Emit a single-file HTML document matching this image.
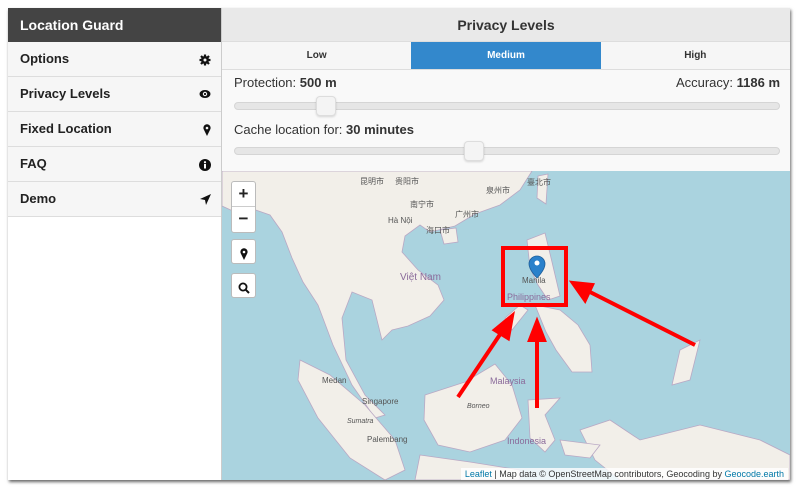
<!DOCTYPE html>
<html><head><meta charset="utf-8"><style>
*{box-sizing:border-box;margin:0;padding:0}
body{width:800px;height:489px;background:#fff;font-family:"Liberation Sans","Noto Sans CJK SC",sans-serif;position:relative;overflow:hidden}
#win{position:absolute;left:8px;top:8px;width:782px;height:472px;background:#fff;box-shadow:1px 2px 3px rgba(0,0,0,.6);overflow:hidden}
#side{position:absolute;left:0;top:0;width:214px;height:472px;background:#fff;border-right:1px solid #ccc}
#side .hd{height:34px;background:#444;color:#fff;font-weight:bold;font-size:14px;line-height:34px;padding-left:12px}
#side .it{height:35px;background:#f6f6f6;border-bottom:1px solid #ddd;font-weight:bold;font-size:13px;line-height:34px;padding-left:12px;color:#222;position:relative}
#side .it svg{position:absolute;right:10px;top:12px}
#main{position:absolute;left:214px;top:0;right:0;height:472px}
.ttl{height:34px;background:#e9e9e9;border-bottom:1px solid #ddd;text-align:center;font-weight:bold;font-size:14px;line-height:34px;color:#333}
.tabs{display:flex;height:28px;background:#f6f6f6;border-bottom:1px solid #ddd}
.tabs div{flex:1;text-align:center;font-size:10px;line-height:28px;color:#333;font-weight:bold}
.tabs .a{background:#3388cc;color:#fff}
.pn{position:absolute;top:62px;left:0;right:0;height:101px;background:#f9f9f9;font-size:13px;color:#333}
.trk{position:absolute;left:12px;right:10px;height:8px;border-radius:4px;background:#e6e6e6;border:1px solid #d5d5d5}
.hdl{position:absolute;width:20px;height:20px;border-radius:4px;background:#f4f4f4;border:1px solid #ddd;box-shadow:0 1px 2px rgba(0,0,0,.15)}
#map{position:absolute;top:163px;left:0;right:0;bottom:0;background:#aad3df}
.btn{position:absolute;left:9px;width:25px;background:#fff;border:1px solid #bbb;border-radius:3px;text-align:center;font-weight:bold;font-size:17px;color:#222}
.attr{position:absolute;right:2px;bottom:0;background:rgba(255,255,255,.8);font-size:9px;padding:1px 4px;color:#333}
.attr b{color:#0078a8;font-weight:normal}
</style></head><body>
<div id="win">
<div id="side">
<div class="hd">Location Guard</div>
<div class="it">Options<svg width="12" height="12" viewBox="0 0 12 12"><circle cx="6" cy="6" r="4" fill="#111"/><g stroke="#111" stroke-width="2.2"><line x1="6" y1="0.5" x2="6" y2="11.5"/><line x1="0.5" y1="6" x2="11.5" y2="6"/><line x1="2" y1="2" x2="10" y2="10"/><line x1="10" y1="2" x2="2" y2="10"/></g><circle cx="6" cy="6" r="1.5" fill="#f6f6f6"/></svg></div>
<div class="it">Privacy Levels<svg width="12" height="10" viewBox="0 0 12 10"><ellipse cx="6" cy="5" rx="5.5" ry="4" fill="#111"/><circle cx="6" cy="5" r="2.2" fill="#f6f6f6"/><circle cx="6" cy="5" r="1.1" fill="#111"/></svg></div>
<div class="it">Fixed Location<svg width="8" height="12" viewBox="0 0 8 12"><path d="M4 12L0.8 5.5A3.6 3.6 0 1 1 7.2 5.5Z" fill="#111"/><circle cx="4" cy="4" r="1.3" fill="#f6f6f6"/></svg></div>
<div class="it">FAQ<svg width="12" height="12" viewBox="0 0 12 12"><circle cx="6" cy="6" r="6" fill="#111"/><rect x="5" y="5" width="2" height="4.5" fill="#fff"/><circle cx="6" cy="3.2" r="1.1" fill="#fff"/></svg></div>
<div class="it">Demo<svg width="11" height="11" viewBox="0 0 11 11"><path d="M11 0L0 5L5 6L6 11Z" fill="#111"/></svg></div>
</div>
<div id="main">
<div class="ttl">Privacy Levels</div>
<div class="tabs"><div>Low</div><div class="a">Medium</div><div>High</div></div>
<div class="pn">
<div style="position:absolute;left:12px;top:5px">Protection: <b>500 m</b></div>
<div style="position:absolute;right:10px;top:5px">Accuracy: <b>1186 m</b></div>
<div class="trk" style="top:32px"></div><div class="hdl" style="left:94px;top:26px"></div>
<div style="position:absolute;left:12px;top:52px">Cache location for: <b>30 minutes</b></div>
<div class="trk" style="top:77px"></div><div class="hdl" style="left:242px;top:71px"></div>
</div>
<div id="map">
<svg width="568" height="309" viewBox="222 171 568 309" style="position:absolute;left:0;top:0">
<g fill="#f2efe9" stroke="#b9a8c4" stroke-width="0.8">
<path d="M222 171L532 171L520 190L500 205L475 214L455 226L430 232L420 225L405 236L402 252L418 270L438 285L444 300L430 316L408 326L392 330L382 340L372 300L352 292L342 318L346 360L365 395L385 415L375 418L352 385L333 345L318 305L303 282L292 258L282 232L270 215L250 208L235 212L222 206Z"/>
<path d="M300 360L330 375L365 405L395 440L405 470L385 480L350 458L318 418L298 380Z"/>
<path d="M425 395L465 382L495 364L512 385L522 418L505 440L470 452L438 445L424 420Z"/>
<path d="M440 230L456 228L458 242L444 244Z"/>
<path d="M538 176L548 174L546 204L537 198Z"/>
<path d="M527 240L545 233L552 262L560 296L548 300L538 285L530 268Z"/>
<path d="M535 305L560 310L578 325L590 345L592 372L572 372L556 350L546 332Z"/>
<path d="M505 318L520 305L528 310L512 330Z"/>
<path d="M528 400L560 398L545 415L555 440L545 452L530 438Z"/>
<path d="M580 430L610 420L640 440L700 425L760 440L790 455L790 480L620 480L595 460Z"/>
<path d="M560 440L600 445L590 458L565 455Z"/>
<path d="M420 455L470 462L520 470L520 480L415 480Z"/>
<path d="M680 350L700 340L690 380L672 385Z"/>
</g>
<g font-size="8" fill="#555" font-family="Liberation Sans,Noto Sans CJK SC,sans-serif">
<text x="360" y="184">昆明市</text><text x="395" y="184">贵阳市</text><text x="410" y="207">南宁市</text><text x="455" y="217">广州市</text>
<text x="388" y="223">Hà Nội</text><text x="426" y="233">海口市</text><text x="486" y="193">泉州市</text><text x="527" y="185">臺北市</text>
<text x="400" y="280" fill="#8a6a9a" font-size="10">Việt Nam</text><text x="490" y="384" fill="#8a6a9a" font-size="9">Malaysia</text>
<text x="507" y="300" fill="#8a6a9a" font-size="9">Philippines</text><text x="507" y="444" fill="#8a6a9a" font-size="9">Indonesia</text>
<text x="322" y="383">Medan</text><text x="362" y="404">Singapore</text><text x="347" y="423" font-style="italic" font-size="7">Sumatra</text>
<text x="367" y="442">Palembang</text><text x="467" y="408" font-style="italic" font-size="7">Borneo</text><text x="522" y="283">Manila</text>
</g>
<path d="M537 256a8 8 0 0 1 8 8c0 6-8 14-8 14s-8-8-8-14a8 8 0 0 1 8-8z" fill="#2a81cb" stroke="#1f5f99" stroke-width=".8"/>
<circle cx="537" cy="263" r="2.5" fill="#fff"/>
<rect x="503" y="248" width="63" height="57" fill="none" stroke="#f00" stroke-width="4"/>
<g stroke="#f00" stroke-width="4" fill="#f00">
<line x1="458" y1="397" x2="503" y2="330"/><path d="M512 316L495 330L508 338Z"/>
<line x1="537" y1="408" x2="537" y2="338"/><path d="M537 322L530 340L544 340Z"/>
<line x1="695" y1="345" x2="590" y2="292"/><path d="M573 283L592 285L585 300Z"/>
</g>
</svg>
<div class="btn" style="top:10px;height:52px;line-height:24px">+<div style="border-top:1px solid #ccc">−</div></div>
<div class="btn" style="top:68px;height:25px;padding-top:5px"><svg width="8" height="12" viewBox="0 0 8 12"><path d="M4 12L0.8 5.5A3.6 3.6 0 1 1 7.2 5.5Z" fill="#111"/><circle cx="4" cy="4" r="1.3" fill="#fff"/></svg></div>
<div class="btn" style="top:102px;height:25px;padding-top:5px"><svg width="12" height="12" viewBox="0 0 12 12"><circle cx="5" cy="5" r="3.6" fill="none" stroke="#111" stroke-width="1.8"/><line x1="7.6" y1="7.6" x2="11" y2="11" stroke="#111" stroke-width="2"/></svg></div>
<div class="attr"><b>Leaflet</b> | Map data © OpenStreetMap contributors, Geocoding by <b>Geocode.earth</b></div>
</div>
</div>
</div>
</body></html>
